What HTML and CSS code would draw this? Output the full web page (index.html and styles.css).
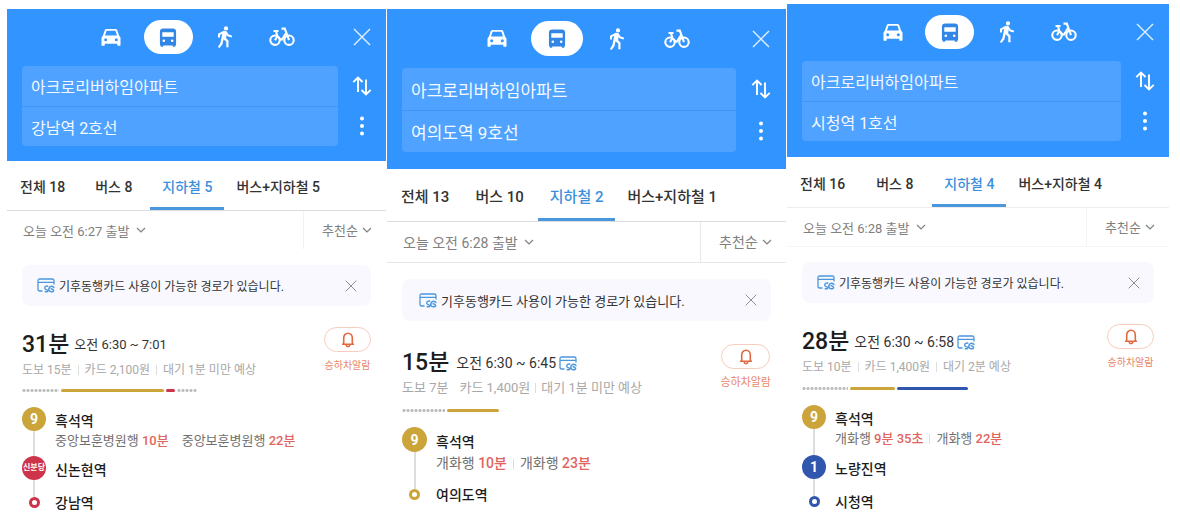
FILE: index.html
```html
<!DOCTYPE html>
<html lang="ko">
<head>
<meta charset="utf-8">
<title>대중교통 길찾기</title>
<link rel="stylesheet" href="styles.css">
</head>
<body>
<svg class="sprite" aria-hidden="true">
  <symbol id="car" viewBox="0 0 22 20"><path fill="currentColor" fill-rule="evenodd" d="M6.4 1h9.2q1.5 0 2 1.4L19.500 8l1.500 2v7.800q0 1-1 1h-1.400q-1 0-1-1V16.500H4.400v1.300q0 1-1 1H2q-1 0-1-1V10l1.500-2L4.400 2.400Q4.900 1 6.400 1zM6.300 3 4.700 8h12.600l-1.600-5zM5.400 10.800a1.600 1.600 0 1 0 0 3.200 1.600 1.600 0 0 0 0-3.200zm11.200 0a1.600 1.600 0 1 0 0 3.200 1.600 1.600 0 0 0 0-3.200z"/></symbol>
  <symbol id="bus" viewBox="0 0 18 20"><path fill="currentColor" fill-rule="evenodd" d="M4 .5h10q3.500 0 3.500 3.500v13q0 .8-.6 1.100v.7q0 1-1 1h-1q-1 0-1-1v-.5H4.100v.5q0 1-1 1h-1q-1 0-1-1v-.7Q.500 17.800.500 17V4Q.500.500 4 .500zM3 4.500v4.800h12V4.500zM4.600 12a1.400 1.400 0 1 0 0 2.800 1.400 1.400 0 0 0 0-2.800zm8.800 0a1.400 1.400 0 1 0 0 2.800 1.400 1.400 0 0 0 0-2.800z"/></symbol>
  <symbol id="walk" viewBox="0 0 16 22"><circle cx="9" cy="2.400" r="2.100" fill="currentColor"/><path fill="none" stroke="currentColor" stroke-width="2" stroke-linejoin="round" d="M2 11.500V8.300l4.800-2.500 2.200.4 1.900 3.100 4 1.300"/><path fill="currentColor" d="m5.600 5.800 3.700-.3.700 1.500-.9 5.200 2.400 2.400v6.600H9.300v-5.500l-2.700-2.500-1.200 5L2.500 22 .9 20.900l2.500-3.800z"/></symbol>
  <symbol id="bike" viewBox="0 0 26 20"><g fill="none" stroke="currentColor" stroke-width="2.100"><circle cx="6" cy="13.200" r="4.700"/><circle cx="20" cy="13.200" r="4.700"/><path d="M4.500 4h5M7 4l1.300 5.300 4.200 3.900M8.300 9.300 6 13.200M12.500 13.200l4.300-6.700M20 13.200 15.800 1.600h-3.300"/></g></symbol>
  <symbol id="close" viewBox="0 0 18 18"><path fill="none" stroke="currentColor" stroke-width="1.400" d="m1 1 16 16M17 1 1 17"/></symbol>
  <symbol id="swap" viewBox="0 0 20 20"><path fill="none" stroke="currentColor" stroke-width="1.900" d="M6 16V2M1.300 6.200 6 1.500l4.500 4.500M14 3.500V18M9.500 14l4.500 4.500 4.700-4.700"/></symbol>
  <symbol id="more" viewBox="0 0 6 20"><g fill="currentColor"><circle cx="3" cy="2.500" r="2"/><circle cx="3" cy="10" r="2"/><circle cx="3" cy="17.500" r="2"/></g></symbol>
  <symbol id="chevron" viewBox="0 0 10 6"><path fill="none" stroke="currentColor" stroke-width="1.200" d="m1 1 4 4 4-4"/></symbol>
  <symbol id="pass" viewBox="0 0 18 15"><g fill="none" stroke="currentColor" stroke-width="1.300"><path d="M5.500 13H2.700q-1.700 0-1.700-1.700V2.500Q1 1 2.700 1h12.600Q17 1 17 2.700V6.500M1 4.400h16"/><path stroke-width="1.500" d="M11.300 8.200Q7.800 7.700 7.700 10q.1 1.300 2 1.900 1.800.7.800 1.500-.9.700-2.800.1M12.600 13.200q-1.400-1.500-.3-3.600 1.300-2 3.700-.9 1.300.6.600 1.400M13.600 10.400l2.500 1.300q1.100 1-.2 1.800-1.700.8-3.300-.3"/></g></symbol>
  <symbol id="bell" viewBox="0 0 14 16"><path fill="none" stroke="currentColor" stroke-width="1.600" stroke-linejoin="round" d="M1 12.200h12M2.700 12V6.200C2.700 3.300 4.500 1.200 7 1.200s4.300 2.100 4.300 5V12M5 12.700q.4 2 2 2t2-2"/></symbol>
</svg>

<main class="board">

  <section class="panel panel-a">
    <header class="search">
      <nav class="modes" aria-label="이동 수단">
        <div class="mode-list">
          <button class="mode" aria-label="자동차"><svg class="i-car"><use href="#car"/></svg></button>
          <button class="mode mode-on" aria-label="대중교통"><svg class="i-bus"><use href="#bus"/></svg></button>
          <button class="mode" aria-label="도보"><svg class="i-walk"><use href="#walk"/></svg></button>
          <button class="mode" aria-label="자전거"><svg class="i-bike"><use href="#bike"/></svg></button>
        </div>
        <button class="side-button" aria-label="닫기"><svg class="i-close"><use href="#close"/></svg></button>
      </nav>
      <div class="places">
        <div class="fields">
          <input class="field" aria-label="출발지" value="아크로리버하임아파트">
          <input class="field" aria-label="도착지" value="강남역 2호선">
        </div>
        <div class="side">
          <button class="side-button" aria-label="출발지 도착지 바꾸기"><svg class="i-swap"><use href="#swap"/></svg></button>
          <button class="side-button" aria-label="더보기"><svg class="i-more"><use href="#more"/></svg></button>
        </div>
      </div>
    </header>
    <nav class="tabs" aria-label="경로 종류">
      <button class="tab">전체 18</button>
      <button class="tab">버스 8</button>
      <button class="tab tab-on">지하철 5</button>
      <button class="tab">버스+지하철 5</button>
    </nav>
    <div class="filters">
      <button class="depart">오늘 오전 6:27 출발 <svg class="i-chevron"><use href="#chevron"/></svg></button>
      <label class="sort"><select class="sort-select" aria-label="정렬"><option>추천순</option></select><svg class="i-chevron"><use href="#chevron"/></svg></label>
    </div>
    <div class="notice">
      <svg class="i-pass"><use href="#pass"/></svg>
      <p class="notice-text">기후동행카드 사용이 가능한 경로가 있습니다.</p>
      <button class="notice-close" aria-label="알림 닫기"><svg class="i-dismiss"><use href="#close"/></svg></button>
    </div>
    <article class="route">
      <div class="summary">
        <div class="summary-main">
          <h2 class="headline"><span class="duration">31분</span><span class="times">오전 6:30 ~ 7:01</span></h2>
          <p class="meta"><span>도보 15분</span><i class="sep"></i><span>카드 2,100원</span><i class="sep"></i><span>대기 1분 미만 예상</span></p>
        </div>
        <button class="alarm"><span class="alarm-pill"><svg class="i-bell"><use href="#bell"/></svg></span><span>승하차알람</span></button>
      </div>
      <div class="legs">
        <span class="leg walk" style="width:37px"></span><span class="leg line9" style="width:103px"></span><span class="leg shinbundang" style="width:9px"></span><span class="leg walk" style="width:20px"></span>
      </div>
      <ol class="stops">
        <li class="stop stop-first">
          <div class="rail"><span class="badge line9">9</span></div>
          <div class="stop-text"><h3 class="station">흑석역</h3>
            <p class="arrivals"><span>중앙보훈병원행 <b>10분</b></span><i class="sep sep-clear"></i><span>중앙보훈병원행 <b>22분</b></span></p></div>
        </li>
        <li class="stop stop-mid">
          <div class="rail"><span class="badge badge-name shinbundang">신분당</span></div>
          <div class="stop-text"><h3 class="station">신논현역</h3></div>
        </li>
        <li class="stop stop-end">
          <div class="rail"><span class="ring ring-shinbundang"></span></div>
          <div class="stop-text"><h3 class="station">강남역</h3></div>
        </li>
      </ol>
    </article>
  </section>

  <section class="panel panel-b">
    <header class="search">
      <nav class="modes" aria-label="이동 수단">
        <div class="mode-list">
          <button class="mode" aria-label="자동차"><svg class="i-car"><use href="#car"/></svg></button>
          <button class="mode mode-on" aria-label="대중교통"><svg class="i-bus"><use href="#bus"/></svg></button>
          <button class="mode" aria-label="도보"><svg class="i-walk"><use href="#walk"/></svg></button>
          <button class="mode" aria-label="자전거"><svg class="i-bike"><use href="#bike"/></svg></button>
        </div>
        <button class="side-button" aria-label="닫기"><svg class="i-close"><use href="#close"/></svg></button>
      </nav>
      <div class="places">
        <div class="fields">
          <input class="field" aria-label="출발지" value="아크로리버하임아파트">
          <input class="field" aria-label="도착지" value="여의도역 9호선">
        </div>
        <div class="side">
          <button class="side-button" aria-label="출발지 도착지 바꾸기"><svg class="i-swap"><use href="#swap"/></svg></button>
          <button class="side-button" aria-label="더보기"><svg class="i-more"><use href="#more"/></svg></button>
        </div>
      </div>
    </header>
    <nav class="tabs" aria-label="경로 종류">
      <button class="tab">전체 13</button>
      <button class="tab">버스 10</button>
      <button class="tab tab-on">지하철 2</button>
      <button class="tab">버스+지하철 1</button>
    </nav>
    <div class="filters">
      <button class="depart">오늘 오전 6:28 출발 <svg class="i-chevron"><use href="#chevron"/></svg></button>
      <label class="sort"><select class="sort-select" aria-label="정렬"><option>추천순</option></select><svg class="i-chevron"><use href="#chevron"/></svg></label>
    </div>
    <div class="notice">
      <svg class="i-pass"><use href="#pass"/></svg>
      <p class="notice-text">기후동행카드 사용이 가능한 경로가 있습니다.</p>
      <button class="notice-close" aria-label="알림 닫기"><svg class="i-dismiss"><use href="#close"/></svg></button>
    </div>
    <article class="route">
      <div class="summary">
        <div class="summary-main">
          <h2 class="headline"><span class="duration">15분</span><span class="times">오전 6:30 ~ 6:45</span><svg class="i-pass"><use href="#pass"/></svg></h2>
          <p class="meta"><span>도보 7분</span><i class="sep sep-clear"></i><span>카드 1,400원</span><i class="sep"></i><span>대기 1분 미만 예상</span></p>
        </div>
        <button class="alarm"><span class="alarm-pill"><svg class="i-bell"><use href="#bell"/></svg></span><span>승하차알람</span></button>
      </div>
      <div class="legs">
        <span class="leg walk" style="width:43px"></span><span class="leg line9" style="width:52px"></span>
      </div>
      <ol class="stops">
        <li class="stop stop-first">
          <div class="rail"><span class="badge line9">9</span></div>
          <div class="stop-text"><h3 class="station">흑석역</h3>
            <p class="arrivals"><span>개화행 <b>10분</b></span><i class="sep"></i><span>개화행 <b>23분</b></span></p></div>
        </li>
        <li class="stop stop-end">
          <div class="rail"><span class="ring ring-line9"></span></div>
          <div class="stop-text"><h3 class="station">여의도역</h3></div>
        </li>
      </ol>
    </article>
  </section>

  <section class="panel panel-c">
    <header class="search">
      <nav class="modes" aria-label="이동 수단">
        <div class="mode-list">
          <button class="mode" aria-label="자동차"><svg class="i-car"><use href="#car"/></svg></button>
          <button class="mode mode-on" aria-label="대중교통"><svg class="i-bus"><use href="#bus"/></svg></button>
          <button class="mode" aria-label="도보"><svg class="i-walk"><use href="#walk"/></svg></button>
          <button class="mode" aria-label="자전거"><svg class="i-bike"><use href="#bike"/></svg></button>
        </div>
        <button class="side-button" aria-label="닫기"><svg class="i-close"><use href="#close"/></svg></button>
      </nav>
      <div class="places">
        <div class="fields">
          <input class="field" aria-label="출발지" value="아크로리버하임아파트">
          <input class="field" aria-label="도착지" value="시청역 1호선">
        </div>
        <div class="side">
          <button class="side-button" aria-label="출발지 도착지 바꾸기"><svg class="i-swap"><use href="#swap"/></svg></button>
          <button class="side-button" aria-label="더보기"><svg class="i-more"><use href="#more"/></svg></button>
        </div>
      </div>
    </header>
    <nav class="tabs" aria-label="경로 종류">
      <button class="tab">전체 16</button>
      <button class="tab">버스 8</button>
      <button class="tab tab-on">지하철 4</button>
      <button class="tab">버스+지하철 4</button>
    </nav>
    <div class="filters">
      <button class="depart">오늘 오전 6:28 출발 <svg class="i-chevron"><use href="#chevron"/></svg></button>
      <label class="sort"><select class="sort-select" aria-label="정렬"><option>추천순</option></select><svg class="i-chevron"><use href="#chevron"/></svg></label>
    </div>
    <div class="notice">
      <svg class="i-pass"><use href="#pass"/></svg>
      <p class="notice-text">기후동행카드 사용이 가능한 경로가 있습니다.</p>
      <button class="notice-close" aria-label="알림 닫기"><svg class="i-dismiss"><use href="#close"/></svg></button>
    </div>
    <article class="route">
      <div class="summary">
        <div class="summary-main">
          <h2 class="headline"><span class="duration">28분</span><span class="times">오전 6:30 ~ 6:58</span><svg class="i-pass"><use href="#pass"/></svg></h2>
          <p class="meta"><span>도보 10분</span><i class="sep"></i><span>카드 1,400원</span><i class="sep"></i><span>대기 2분 예상</span></p>
        </div>
        <button class="alarm"><span class="alarm-pill"><svg class="i-bell"><use href="#bell"/></svg></span><span>승하차알람</span></button>
      </div>
      <div class="legs">
        <span class="leg walk" style="width:46px"></span><span class="leg line9" style="width:45px"></span><span class="leg line1" style="width:71px"></span>
      </div>
      <ol class="stops">
        <li class="stop stop-first">
          <div class="rail"><span class="badge line9">9</span></div>
          <div class="stop-text"><h3 class="station">흑석역</h3>
            <p class="arrivals"><span>개화행 <b>9분 35초</b></span><i class="sep"></i><span>개화행 <b>22분</b></span></p></div>
        </li>
        <li class="stop stop-mid">
          <div class="rail"><span class="badge line1">1</span></div>
          <div class="stop-text"><h3 class="station">노량진역</h3></div>
        </li>
        <li class="stop stop-end">
          <div class="rail"><span class="ring ring-line1"></span></div>
          <div class="stop-text"><h3 class="station">시청역</h3></div>
        </li>
      </ol>
    </article>
  </section>

</main>
</body>
</html>
```

FILE: styles.css
```css
*, *::before, *::after { box-sizing: border-box; }

body {
  margin: 0;
  background: #fff;
  color: #333;
  font-family: Roboto, "Noto Sans CJK KR", sans-serif;
}

h2, h3, p, ol { margin: 0; padding: 0; font-weight: 400; }
ol { list-style: none; }

button, input, select {
  margin: 0;
  padding: 0;
  border: 0;
  background: none;
  color: inherit;
  font: inherit;
  outline: 0;
}
button { display: flex; align-items: center; justify-content: center; }
svg { display: block; flex: none; }
.sprite { position: absolute; width: 0; height: 0; }

.board {
  display: grid;
  grid-template-columns: 379fr 399fr 382fr;
  column-gap: 1px;
  align-items: start;
  padding: 4px 11px 0 7px;
}

/* per-panel density */
.panel {
  --side: 48px;
  --pill-w: 49px;
  --pill-h: 34px;
  --field-h: 40px;
  --field-font: 16px;
  --tab-font: 14px;
  --tab-h: 50px;
  --tab-gap: 6px;
  --filter-font: 13px;
  --filter-h: 39px;
  --notice-font: 12px;
  --notice-h: 41px;
  --times-font: 13px;
  --meta-font: 12px;
  --meta-gap: 6px;
  --alarm-w: 47px;
  --alarm-font: 10px;
  --badge: 24px;
  --first-h: 49px;
  --arrival-font: 13px;
  --line: 20px;
  --tab-rule: #dcdcdc;
  --filter-rule: #fff;
  --split-rule: #f2f2f2;
  min-width: 0;
}
.panel-a { margin-top: 5px; }
.panel-b {
  --side: 50px;
  --pill-w: 52px;
  --pill-h: 35px;
  --field-h: 42px;
  --field-font: 17px;
  --tab-font: 15px;
  --tab-h: 53px;
  --tab-gap: 2px;
  --filter-font: 14px;
  --filter-h: 41px;
  --notice-font: 13px;
  --notice-h: 42px;
  --times-font: 14px;
  --meta-font: 13px;
  --meta-gap: 5px;
  --alarm-w: 49px;
  --alarm-font: 11px;
  --badge: 25px;
  --first-h: 58px;
  --arrival-font: 14px;
  --line: 21px;
  --filter-rule: #e8e8e8;
  --split-rule: #e8e8e8;
  margin-top: 5px;
}
.panel-c {
  --tab-h: 51px;
  --tab-gap: 7px;
  --times-font: 14px;
  --first-h: 50px;
  --tab-rule: #ededed;
  --filter-rule: #f5f5f5;
  --split-rule: #f5f5f5;
}

/* header */
.search { padding: 11px 0 15px 15px; background: #3295ff; color: #fff; }
.panel-b .search { padding: 12px 0 17px 15px; }
.panel-c .search { padding-bottom: 16px; }
.modes {
  display: grid;
  grid-template-columns: 1fr auto 1fr;
  align-items: center;
  margin-left: -15px;
}
.mode-list { display: flex; gap: 8px; grid-column: 2; }
.mode { width: var(--pill-w); height: var(--pill-h); border-radius: 18px; }
.mode-on { background: #fff; color: #3287e6; }
.side-button { width: var(--side); height: var(--field-h); }
.modes .side-button { justify-self: end; height: var(--pill-h); color: #e2f0ff; }
.places { display: flex; margin-top: 12px; }
.fields { flex: 1; min-width: 0; border-radius: 4px; background: #4fa2ff; overflow: hidden; }
.field {
  display: block;
  width: 100%;
  height: var(--field-h);
  padding: 0 9px;
  color: #f4f9ff;
  font-size: var(--field-font);
}
.field + .field { border-top: 1px solid #4096f7; }
.i-car { width: 22px; height: 19px; }
.i-bus { width: 18px; height: 19px; }
.i-walk { width: 16px; height: 22px; }
.i-bike { width: 26px; height: 20px; }
.i-close { width: 18px; height: 18px; }
.i-swap { width: 20px; height: 20px; }
.i-more { width: 6px; height: 20px; }

/* tabs */
.tabs { display: flex; height: var(--tab-h); padding-left: 1px; border-bottom: 1px solid var(--tab-rule); }
.panel-b .tabs { padding-left: 2px; }
.tab {
  margin-right: var(--tab-gap);
  padding: 4px 12px 0;
  border-bottom: 3px solid transparent;
  font-size: var(--tab-font);
  font-weight: 500;
  white-space: nowrap;
}
.tab-on { margin-right: 0; border-color: #4a97de; color: #3d8fdc; }

/* filters */
.filters {
  display: flex;
  height: var(--filter-h);
  border-bottom: 1px solid var(--filter-rule);
  color: #808080;
  font-size: var(--filter-font);
}
.depart { flex: 1; justify-content: flex-start; gap: 6px; padding-left: 16px; }
.sort {
  display: flex;
  align-items: center;
  gap: 4px;
  padding: 0 14px 0 18px;
  border-left: 1px solid var(--split-rule);
}
.sort-select { appearance: none; }
.i-chevron { width: 10px; height: 6px; }

/* notice */
.notice {
  display: flex;
  align-items: center;
  gap: 4px;
  height: var(--notice-h);
  margin: 15px 15px 0;
  padding: 0 14px 0 15px;
  border-radius: 8px;
  background: #f8f8fe;
}
.panel-b .notice { margin-top: 16px; padding-left: 17px; }
.notice-text { flex: 1; font-size: var(--notice-font); white-space: nowrap; }
.notice-close { color: #888; }
.i-pass { width: 18px; height: 15px; color: #4a97de; }
.i-dismiss { width: 12px; height: 12px; }

/* route summary */
.route { padding: 0 15px; }
.summary { display: flex; justify-content: space-between; align-items: flex-start; }
.summary-main { padding-top: 25px; }
.panel-b .summary-main { padding-top: 28px; }
.headline { display: flex; align-items: center; height: 28px; }
.duration { margin-right: 5px; color: #1c1c1c; font-size: 23px; font-weight: 500; line-height: 28px; }
.panel-b .duration { margin-right: 7px; }
.times { margin-right: 3px; font-size: var(--times-font); line-height: 28px; }
.meta { display: flex; align-items: center; color: #a8a8a8; font-size: var(--meta-font); line-height: 22px; white-space: nowrap; }
.sep { width: 1px; height: 10px; margin: 0 var(--meta-gap); background: #ddd; }
.sep-clear { background: transparent; }
.alarm {
  flex-direction: column;
  gap: 6px;
  margin-top: 21px;
  color: #e8876a;
  font-size: var(--alarm-font);
  line-height: 16px;
}
.panel-b .alarm { margin-top: 23px; }
.alarm-pill {
  display: flex;
  align-items: center;
  justify-content: center;
  width: var(--alarm-w);
  height: 25px;
  border: 1px solid #f7cdbd;
  border-radius: 13px;
  color: #e0693f;
}
.i-bell { width: 14px; height: 16px; }

/* proportional leg bar */
.legs { display: flex; gap: 2px; height: 3px; margin: 8px 0 15px; }
.panel-b .legs { margin-top: 10px; }
.panel-c .legs { margin-top: 9px; }
.leg { border-radius: 2px; }
.line9 { background: #cba43a; }
.line1 { background: #3056ae; }
.shinbundang { background: #cd3349; }
.walk { border-radius: 0; background: radial-gradient(circle, #bbb 1px, transparent 2px) 0 0 / 4px 3px; }

/* stops */
.stop { display: flex; gap: 9px; }
.stop-first { min-height: var(--first-h); }
.stop-mid { min-height: 37px; }
.rail { display: flex; flex-direction: column; align-items: center; width: var(--badge); }
.stop-first .rail::after, .stop-mid .rail::after { content: ""; flex: 1; width: 2px; background: #ddd; }
.stop-end .rail::before { content: ""; width: 2px; height: 4px; background: #ddd; }
.badge {
  display: flex;
  align-items: center;
  justify-content: center;
  width: var(--badge);
  height: var(--badge);
  border-radius: 50%;
  color: #fff;
  font-size: 14px;
  font-weight: 700;
  line-height: 16px;
}
.badge-name { font-size: 8px; white-space: nowrap; }
.ring { width: 11px; height: 11px; border: 3px solid; border-radius: 50%; }
.ring-line9 { color: #cba43a; }
.ring-line1 { color: #3056ae; }
.ring-shinbundang { color: #cd3349; }
.stop-text { padding-top: 4px; line-height: var(--line); }
.panel-b .stop-first .stop-text { padding-top: 5px; }
.stop-end .stop-text { padding-top: 0; }
.station { color: #1c1c1c; font-size: 14px; font-weight: 500; line-height: var(--line); }
.arrivals { display: flex; align-items: center; color: #707070; font-size: var(--arrival-font); white-space: nowrap; }
.arrivals b { color: #e0655f; font-weight: 500; }
.arrivals .sep { margin: 0 6px; }
```
